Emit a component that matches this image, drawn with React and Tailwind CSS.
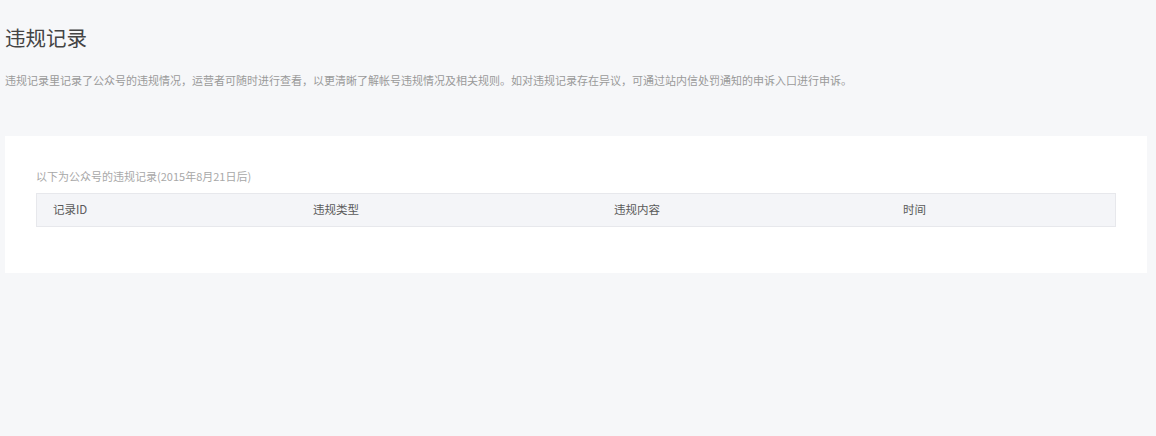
export default function App() {
  return (
    <div
      className="w-[1156px] h-[436px] bg-[#f6f7f9] pl-[5px] pr-[9px] pt-[24px]"
      style={{ fontFamily: '"Noto Sans CJK SC", "Noto Sans", sans-serif' }}
    >
      <h2 className="text-[20.5px] leading-[26px] text-[#444] font-normal">违规记录</h2>
      <p className="mt-[22px] text-[11px] leading-[16px] text-[#9a9a9a]">
        违规记录里记录了公众号的违规情况，运营者可随时进行查看，以更清晰了解帐号违规情况及相关规则。如对违规记录存在异议，可通过站内信处罚通知的申诉入口进行申诉。
      </p>
      <div className="mt-[48px] bg-white h-[137px] px-[31px] pt-[32px]">
        <p className="text-[11px] leading-[16px] text-[#a8a8a8]">以下为公众号的违规记录(2015年8月21日后)</p>
        <div className="mt-[9px] flex h-[34px] items-center bg-[#f4f5f8] border border-[#e7e8ec] text-[11.5px] text-[#5a5a5a]">
          <div className="w-[259px] pl-[16px]">记录ID</div>
          <div className="w-[301px] pl-[17px]">违规类型</div>
          <div className="w-[289px] pl-[17px]">违规内容</div>
          <div className="flex-1 pl-[17px]">时间</div>
        </div>
      </div>
    </div>
  );
}
